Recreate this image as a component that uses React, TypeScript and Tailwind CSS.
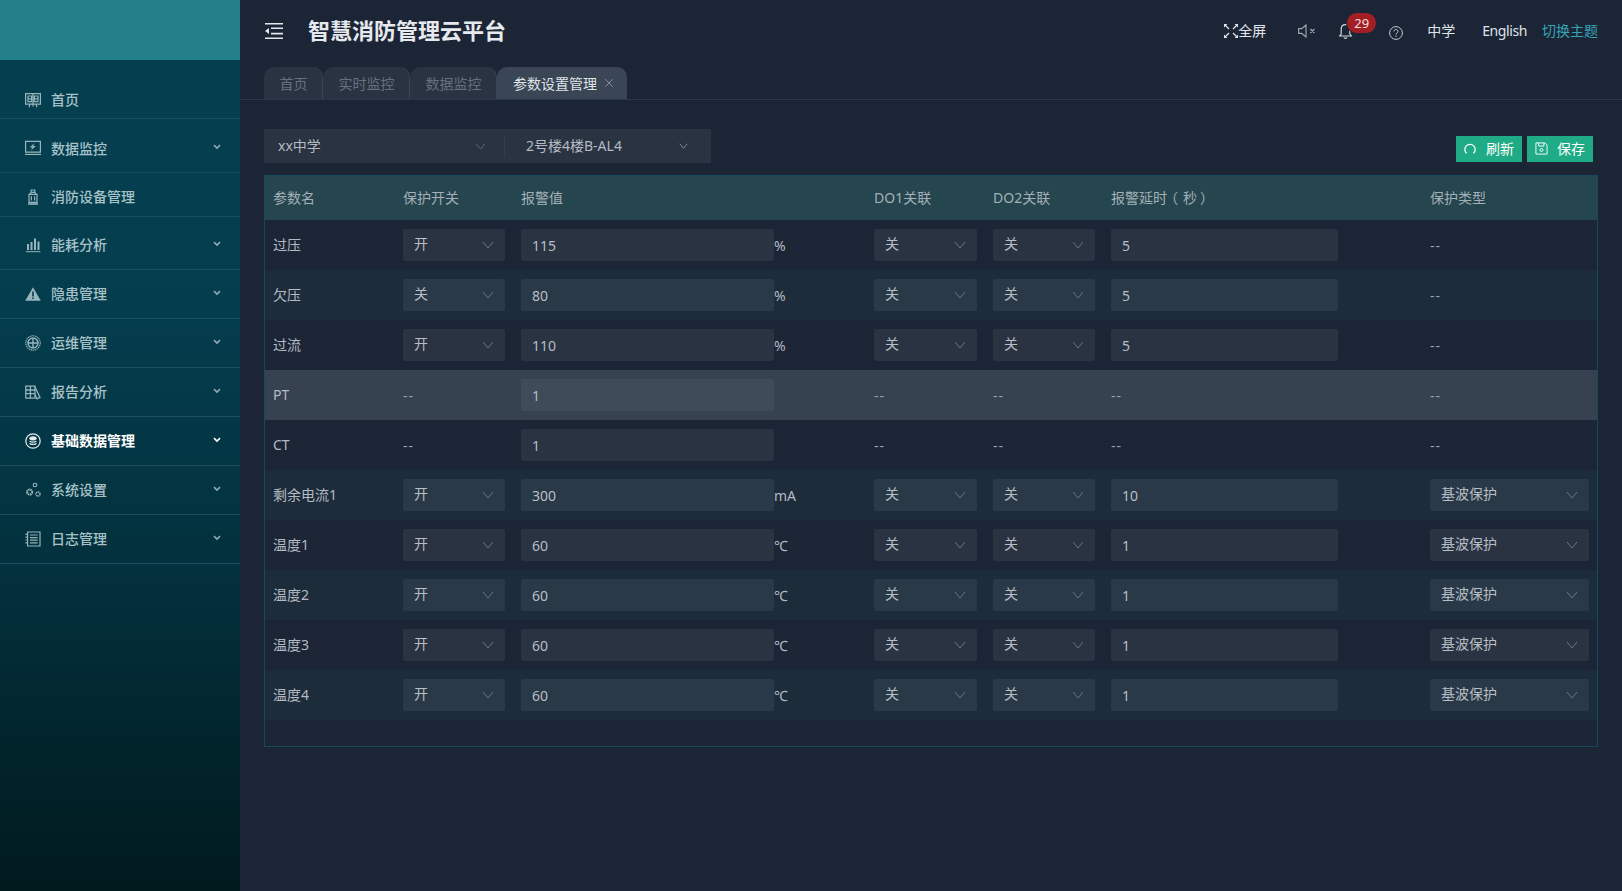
import type { ReactNode } from 'react';
import { X } from 'lucide-react';

const FONT = '[font-family:"Noto_Sans","Noto_Sans_CJK_SC",sans-serif]';

function Chevron({ className }: { className?: string }) {
  return (
    <svg viewBox="0 0 12 8" className={className} fill="none" stroke="currentColor" strokeWidth="1">
      <path d="M1 1l5 6 5-6" />
    </svg>
  );
}

// sidebar icons, all on a 16 box
const icons: Record<string, ReactNode> = {
  home: (
    <g fill="none" stroke="currentColor" strokeWidth="1.2">
      <path d="M.6 1.6h14.8v10.6H.6z" />
      <path d="M3 4h3.6v5.6H3zM9.4 4H13v5.6H9.4zM3 6.8h3.6M9.4 6.8H13M8 1.6v13M5 12.2l-1 3M11 12.2l1 3" />
    </g>
  ),
  monitor: (
    <g>
      <path d="M.6 1.4h14.8v10.8H.6z" fill="none" stroke="currentColor" strokeWidth="1.2" />
      <path d="M9.4 3L4.6 7.6h2.8L6 10.6l5-4.6H8.2z" fill="currentColor" />
      <path d="M0 13.8h16v1.2H0z" fill="currentColor" />
    </g>
  ),
  device: (
    <g fill="none" stroke="currentColor" strokeWidth="1.2">
      <path d="M6.2 1h3.6v2.4H6.2zM4.6 5.4L6.2 3.4h3.6l1.6 2zM4 5.4h8v8H4z" />
      <path d="M6.4 7.2v4.4M9.6 7.2v4.4" />
      <path d="M3 15h10" strokeWidth="1.6" />
    </g>
  ),
  bars: (
    <g fill="currentColor">
      <path d="M2 7h2v6H2zM5.5 5h2v8h-2zM9 1.6h2V13H9zM12.5 4.5h2V13h-2z" />
      <path d="M1 14.2h14.4v1H1z" />
    </g>
  ),
  warn: (
    <path
      d="M8 1.2l7.8 13.6H.2zM7.2 5.6v5h1.6v-5zM7.2 11.4v1.6h1.6v-1.6z"
      fill="currentColor"
      fillRule="evenodd"
    />
  ),
  globe: (
    <g fill="none" stroke="currentColor" strokeWidth="1.1">
      <circle cx="8" cy="8" r="7.2" strokeDasharray="1.4 .6" />
      <circle cx="8" cy="8" r="5" strokeWidth="1.5" />
      <path d="M3 8h10M8 3v10" strokeWidth="1.4" />
    </g>
  ),
  report: (
    <g fill="none" stroke="currentColor" strokeWidth="1.3">
      <path d="M.8 2.2h4.6v12H.8zM5.4 2.2H10v12H5.4z" />
      <path d="M.8 6h4.6M5.4 6H10M.8 9.6h9.2" />
      <path d="M10 3l5 10.4-3 1.4-2-4" />
    </g>
  ),
  data: (
    <g fill="none" stroke="currentColor">
      <circle cx="8" cy="8" r="7.2" strokeWidth="1.2" />
      <ellipse cx="8" cy="5.4" rx="3.4" ry="1.6" fill="currentColor" />
      <path d="M4.6 8c.8 1.4 6 1.4 6.8 0M4.6 10.4c.8 1.4 6 1.4 6.8 0" strokeWidth="1.3" />
    </g>
  ),
  gears: (
    <g fill="none" stroke="currentColor">
      <circle cx="4.6" cy="10" r="2.6" strokeWidth="2" strokeDasharray="1.6 .5" />
      <circle cx="10" cy="3" r="1.8" strokeWidth="1.1" />
      <circle cx="13" cy="12" r="2" strokeWidth="1.5" strokeDasharray="1.2 .5" />
    </g>
  ),
  log: (
    <g fill="none" stroke="currentColor">
      <path d="M2.6 1h12.4v14H2.6z" strokeWidth="1.2" />
      <path d="M5 4h7.6M5 6.6h7.6M5 9.2h7.6M5 11.8h7.6" strokeWidth="1.2" />
      <path d="M.4 3.4h2.2M.4 6.2h2.2M.4 9h2.2M.4 11.8h2.2" strokeWidth="1.2" />
    </g>
  ),
};

const menu = [
  { label: '首页', icon: 'home', box: 'h-[59px] pt-[21px]', arrow: false },
  { label: '数据监控', icon: 'monitor', box: 'h-[54px] pt-[5px]', arrow: true },
  { label: '消防设备管理', icon: 'device', box: 'h-[44px] pt-[4px]', arrow: false },
  { label: '能耗分析', icon: 'bars', box: 'h-[53px] pt-[3px]', arrow: true },
  { label: '隐患管理', icon: 'warn', box: 'h-[49px] pb-[1px]', arrow: true },
  { label: '运维管理', icon: 'globe', box: 'h-[49px] pb-[1px]', arrow: true },
  { label: '报告分析', icon: 'report', box: 'h-[49px] pb-[1px]', arrow: true },
  { label: '基础数据管理', icon: 'data', box: 'h-[49px] pb-[1px]', arrow: true, active: true },
  { label: '系统设置', icon: 'gears', box: 'h-[49px] pb-[1px]', arrow: true },
  { label: '日志管理', icon: 'log', box: 'h-[49px] pb-[1px]', arrow: true },
];

function Sidebar() {
  return (
    <aside className="w-[240px] shrink-0 flex flex-col bg-[linear-gradient(180deg,#043f50_0%,#043d4e_35%,#03303c_65%,#001a1e_100%)]">
      <div className="h-[60px] bg-[#23808b]" />
      {menu.map(item => (
        <div
          key={item.label}
          className={`${item.box} flex items-center pl-[25px] pr-[19px] border-b border-[#1a4f60] ${
            item.active ? 'text-white font-bold' : 'text-[#a8c2c8] font-medium'
          }`}
        >
          <svg viewBox="0 0 16 16" className="w-[16px] h-[16px] shrink-0 opacity-90">
            {icons[item.icon]}
          </svg>
          <span className="ml-[10px] text-[14px] flex-1">{item.label}</span>
          {item.arrow && (
            <svg
              viewBox="0 0 10 8"
              className={`w-[8px] h-[6px] mb-[2px] ${item.active ? 'text-white' : 'text-[#8eaab2]'}`}
              fill="none"
              stroke="currentColor"
              strokeWidth="2"
            >
              <path d="M1 1.5l4 4 4-4" />
            </svg>
          )}
        </div>
      ))}
    </aside>
  );
}

function Header() {
  return (
    <div className="h-[60px] flex items-center pt-[1px] pl-[25px] pr-[24px] text-[14px]">
      <svg viewBox="0 0 18 16" className="w-[18px] h-[16px] text-[#e4e7ec]" fill="currentColor">
        <path d="M0 0h18v1.6H0zM6 4.4h12V6H6zM6 9.8h12v1.6H6zM0 14.4h18V16H0zM4 5v6L0 8z" />
      </svg>
      <span className="ml-[25px] text-[22px] font-bold text-[#e6e9ee]">智慧消防管理云平台</span>
      <div className="flex-1" />
      <svg viewBox="0 0 14 14" className="w-[14px] h-[14px] text-[#e4e7ec]" fill="none" stroke="currentColor" strokeWidth="1.2">
        <path d="M1 1l4 4M13 1L9 5M1 13l4-4M13 13L9 9" />
        <path d="M0 0h3.4L0 3.4zM14 0v3.4L10.6 0zM0 14v-3.4L3.4 14zM14 14h-3.4L14 10.6z" fill="currentColor" stroke="none" />
      </svg>
      <span className="text-[#e4e7ec]">全屏</span>
      <svg viewBox="0 0 18 14" className="ml-[32px] w-[18px] h-[14px] text-[#a3a9b3]" fill="none" stroke="currentColor" strokeWidth="1.1">
        <path d="M.6 4.6h3L8 1v12L3.6 9.4h-3zM12.4 5l4 4M16.4 5l-4 4" />
      </svg>
      <div className="relative ml-[23px] w-[13px] h-[16px]">
        <svg viewBox="0 0 13 16" className="w-[13px] h-[16px] text-[#d0d4da]" fill="none" stroke="currentColor" strokeWidth="1.2">
          <path d="M.6 13h11.8l-1.6-2V6.4C10.8 3.6 9 1.6 6.5 1.6S2.2 3.6 2.2 6.4V11zM5 14.4c.4 1.2 2.6 1.2 3 0" />
        </svg>
        <span className="absolute left-[7px] top-[-11px] w-[31px] h-[22px] rounded-full bg-[#a31f24] border border-[#1c2536] text-[#f4dfe0] text-[13px] leading-[20px] text-center">
          29
        </span>
      </div>
      <svg viewBox="0 0 14 14" className="ml-[37px] mt-[5px] w-[14px] h-[14px] text-[#c4c8cf]" fill="none" stroke="currentColor" strokeWidth="1">
        <circle cx="7" cy="7" r="6.4" />
        <path d="M5 5.4c0-2.6 4-2.6 4 0 0 1.5-2 1.5-2 3.2M7 9.6v1.2" />
      </svg>
      <span className="ml-[24px] text-[#dfe3e8]">中学</span>
      <span className="ml-[27px] tracking-[-0.4px] text-[#dfe3e8]">English</span>
      <span className="ml-[15px] text-[#36a3b5]">切换主题</span>
    </div>
  );
}

const tabs = [
  { label: '首页', w: 'w-[59px]' },
  { label: '实时监控', w: 'w-[87px]' },
  { label: '数据监控', w: 'w-[87px]' },
];

function Tabs() {
  return (
    <div className="mt-[7px] h-[33px] flex pl-[24px] border-b border-[#2b3a4a] text-[14px]">
      {tabs.map(tab => (
        <div
          key={tab.label}
          className={`${tab.w} h-[32px] flex items-center justify-center pl-[1px] rounded-t-[10px] bg-[#2a3342] border-r border-[#3b4655] text-[#667080]`}
        >
          {tab.label}
        </div>
      ))}
      <div className="w-[130px] h-[32px] flex items-center pl-[16px] rounded-t-[10px] bg-[#3a4655] text-[#dfe3e8]">
        参数设置管理
        <X className="ml-[5px] w-[14px] h-[14px] text-[#a5acb6]" strokeWidth={1.2} />
      </div>
    </div>
  );
}

function Toolbar() {
  return (
    <div className="mt-[29px] flex items-center justify-between pr-[29px] text-[14px]">
      <div className="w-[447px] h-[34px] flex items-center bg-[#2a3342] text-[#b4bac3]">
        <span className="pl-[14px] w-[188px] mb-[2px]">xx中学</span>
        <Chevron className="w-[11px] h-[7px] ml-[23px] text-[#667080]" />
        <span className="ml-[18px] w-px h-[21px] bg-[#323c4b]" />
        <span className="ml-[21px] w-[153px] mb-[2px]">2号楼4楼B-AL4</span>
        <Chevron className="w-[9px] h-[6px] text-[#9aa1ab]" />
      </div>
      <div className="flex gap-[5px] mt-[5px]">
        <button className="w-[66px] h-[26px] flex items-center pl-[8px] bg-[#1fab85] text-white">
          <svg viewBox="0 0 14 14" className="w-[12px] h-[12px]" fill="none" stroke="currentColor" strokeWidth="1.5">
            <path d="M3 12A6 6 0 1 1 11 12" />
          </svg>
          <span className="ml-[10px]">刷新</span>
        </button>
        <button className="w-[66px] h-[26px] flex items-center pl-[8px] bg-[#1fab85] text-white">
          <svg viewBox="0 0 14 14" className="w-[13px] h-[13px]" fill="none" stroke="currentColor" strokeWidth="1">
            <path d="M1 1h9.6L13 3.4V13H1zM4 1v3.4h5.6V1" />
            <circle cx="7" cy="8.6" r="1.6" />
          </svg>
          <span className="ml-[9px]">保存</span>
        </button>
      </div>
    </div>
  );
}

type Row = {
  name: string;
  on?: string;
  value: string;
  unit?: string;
  delay?: string;
  type?: string;
};

const rows: Row[] = [
  { name: '过压', on: '开', value: '115', unit: '%', delay: '5', type: '--' },
  { name: '欠压', on: '关', value: '80', unit: '%', delay: '5', type: '--' },
  { name: '过流', on: '开', value: '110', unit: '%', delay: '5', type: '--' },
  { name: 'PT', value: '1' },
  { name: 'CT', value: '1' },
  { name: '剩余电流1', on: '开', value: '300', unit: 'mA', delay: '10', type: '基波保护' },
  { name: '温度1', on: '开', value: '60', unit: '℃', delay: '1', type: '基波保护' },
  { name: '温度2', on: '开', value: '60', unit: '℃', delay: '1', type: '基波保护' },
  { name: '温度3', on: '开', value: '60', unit: '℃', delay: '1', type: '基波保护' },
  { name: '温度4', on: '开', value: '60', unit: '℃', delay: '1', type: '基波保护' },
];

const COLS = 'grid grid-cols-[130px_118px_353px_119px_118px_319px_175px] items-center';

function Field({ fill, className, children }: { fill: string; className?: string; children: ReactNode }) {
  return (
    <div className={`${fill} ${className ?? ''} h-[32px] rounded-[2px] flex items-center pl-[11px] text-[#b8bec6]`}>
      {children}
    </div>
  );
}

function Select({ fill, value }: { fill: string; value: string }) {
  return (
    <Field fill={fill} className="justify-between pr-[11px]">
      <span className="mb-[4px]">{value}</span>
      <Chevron className="w-[12px] h-[8px] text-[#6b7380]" />
    </Field>
  );
}

function Dash() {
  return <span className="text-[#9aa1ab] tracking-[1px]">--</span>;
}

function ParamTable() {
  return (
    <div className="mt-[12px] mr-[24px] h-[572px] border border-[#17485c] text-[14px] text-[#b4bac3]">
      <div className={`${COLS} h-[44px] pb-[2px] bg-[#25454f] text-[#a4b0b6]`}>
        <div className="pl-[8px]">参数名</div>
        <div className="pl-[8px]">保护开关</div>
        <div className="pl-[8px]">报警值</div>
        <div className="pl-[8px]">DO1关联</div>
        <div className="pl-[8px]">DO2关联</div>
        <div className="pl-[8px] flex">
          报警延时<span className="ml-[-3px]">（</span><span className="ml-[5px]">秒</span><span className="ml-[3px]">）</span>
        </div>
        <div className="pl-[8px]">保护类型</div>
      </div>
      {rows.map((row, i) => {
        const hover = i === 3;
        const bg = hover ? 'bg-[#36424f]' : i % 2 === 1 ? 'bg-[#1d2c3a]' : 'bg-[#1c2536]';
        const fill = hover ? 'bg-[#3f4b59]' : i % 2 === 1 ? 'bg-[#2a3947]' : 'bg-[#2a3342]';
        return (
          <div key={row.name} className={`${COLS} h-[50px] ${bg}`}>
            <div className="pl-[8px] mb-[2px]">{row.name}</div>
            <div className="px-[8px]">{row.on ? <Select fill={fill} value={row.on} /> : <Dash />}</div>
            <div className="pl-[8px] flex items-center">
              <Field fill={fill} className="w-[253px]">{row.value}</Field>
              {row.unit && <span>{row.unit}</span>}
            </div>
            <div className="px-[8px]">{row.on ? <Select fill={fill} value="关" /> : <Dash />}</div>
            <div className="px-[8px]">{row.on ? <Select fill={fill} value="关" /> : <Dash />}</div>
            <div className="pl-[8px]">
              {row.delay ? <Field fill={fill} className="w-[227px]">{row.delay}</Field> : <Dash />}
            </div>
            <div className="px-[8px]">
              {row.type && row.type !== '--' ? <Select fill={fill} value={row.type} /> : <Dash />}
            </div>
          </div>
        );
      })}
    </div>
  );
}

export default function App() {
  return (
    <div className={`${FONT} flex w-full h-[891px] overflow-hidden bg-[#1c2536]`}>
      <Sidebar />
      <main className="flex-1 min-w-0">
        <Header />
        <Tabs />
        <div className="pl-[24px]">
          <Toolbar />
          <ParamTable />
        </div>
      </main>
    </div>
  );
}
